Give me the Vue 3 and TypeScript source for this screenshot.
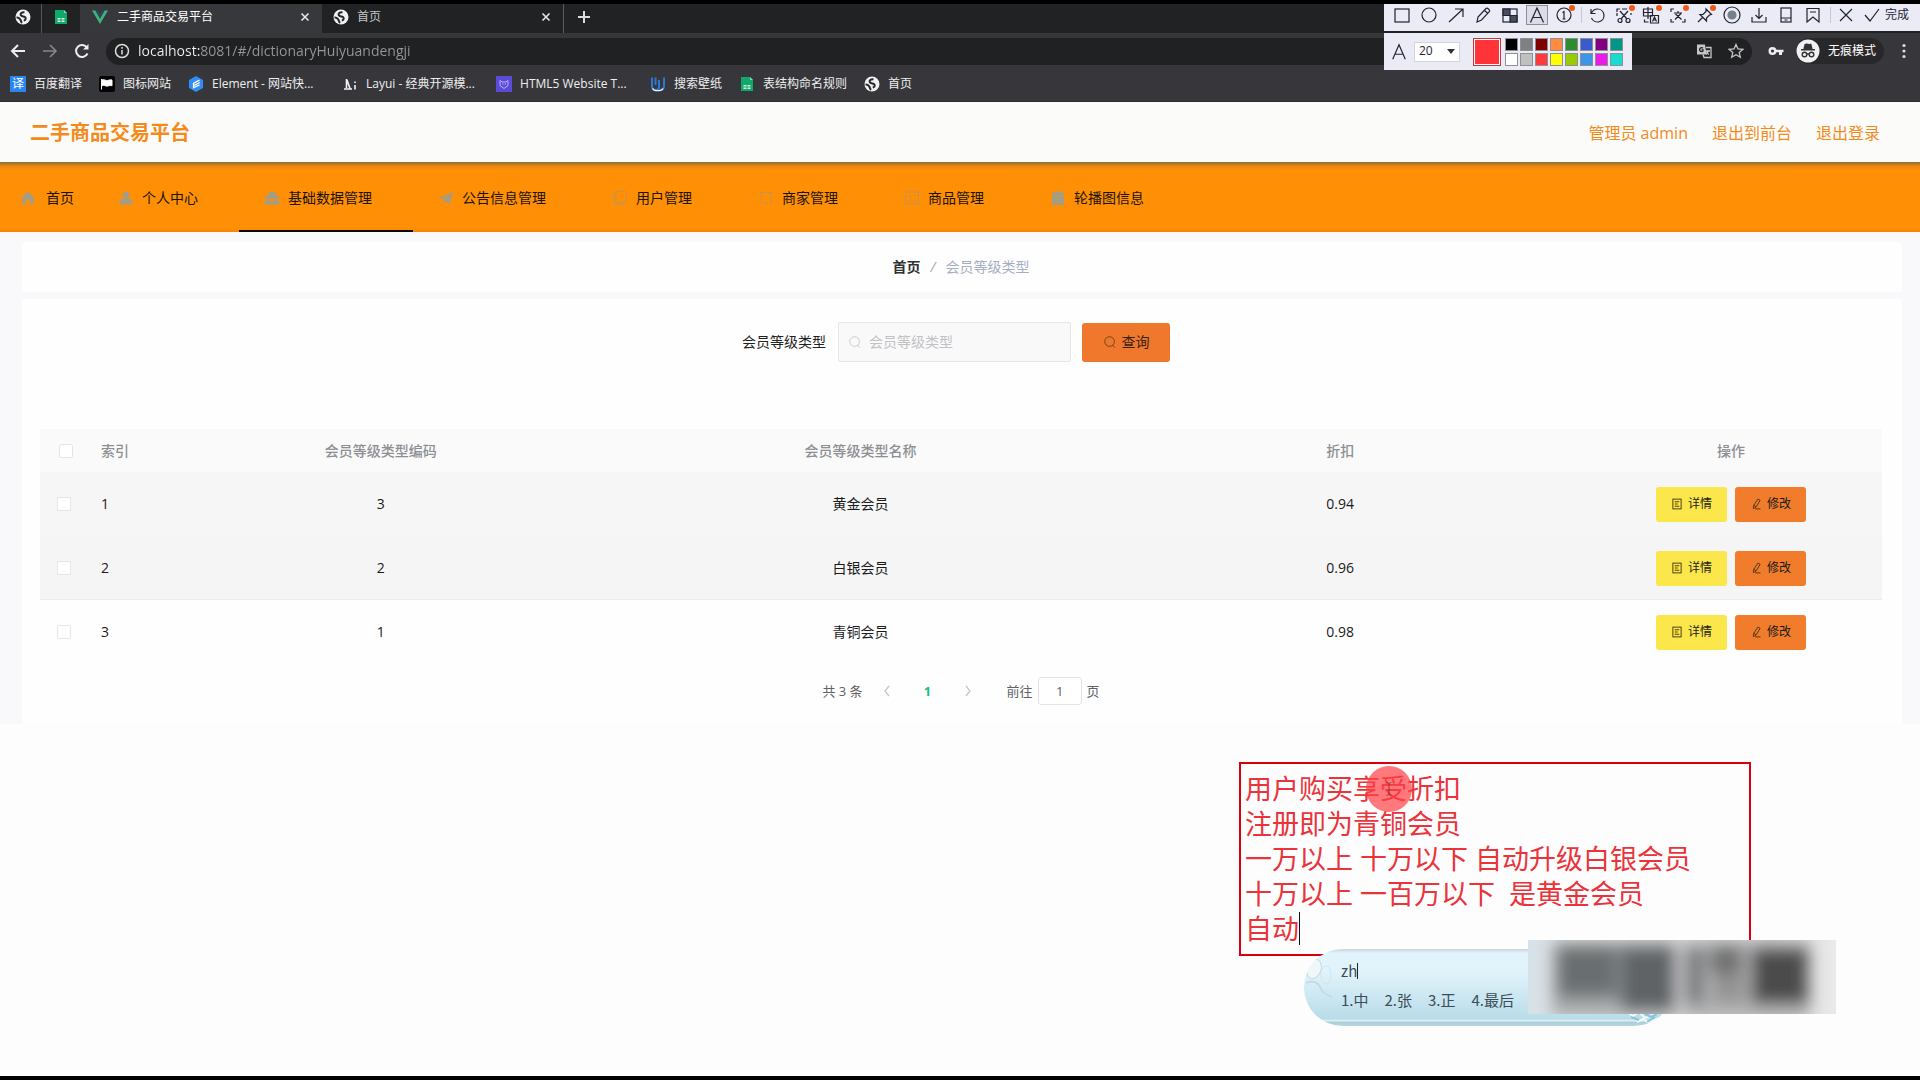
<script setup lang="ts">
import { ref } from 'vue'

interface Level {
  id: number
  code: string
  name: string
  discount: string
}

const icons: Record<string, string> = {
  globe:
    '<circle cx="8" cy="8" r="7.500" fill="#f1f1f1"/><path d="M9.500 3.200C6.500 3 5 4.500 5.800 6.300c.8 1.500 3 .8 4.200 1.700 1.500 1.200.5 3-1.200 3.600M1.500 8.500c1.500-.2 3 .5 3.800 2 .5 1 .8 2.500 1.700 3.500" fill="none" stroke="#25272a" stroke-width="2"/>',
  sheet:
    '<path d="M2 1h9l3 3v11H2z" fill="#11a86b"/><path d="M11 1v3h3z" fill="#7fd6b0"/><path d="M4.500 9h3v1.500h-3zM8.500 9h3v1.500h-3zM4.500 11.500h3V13h-3zM8.500 11.500h3V13h-3z" fill="#d8f5e8"/>',
  vue: '<path d="M0 1.500h3.400L8 9.500l4.600-8H16L8 15z" fill="#3fb27f"/><path d="M3.400 1.500h2.800L8 4.700l1.800-3.200h2.800L8 9.500z" fill="#2c4a52"/>',
  flag: '<rect width="16" height="16" rx="2" fill="#050505"/><path d="M2.500 3v10.500M3 4c2-1.200 3.500.9 5.500.5 1.500-.3 2.500-1 4.500-.4v5.600c-2-.6-3 .2-4.500.4C6.500 10.400 5 8.600 3 9.700z" fill="#fff" stroke="#fff"/>',
  element:
    '<path d="M8 0l7 4v8l-7 4-7-4V4z" fill="#2f8df5"/><path d="M11.500 4.200L5.500 7.300v4.500l6-3M11.800 6.500L6 9.500" fill="none" stroke="#fff" stroke-width="1.300"/>',
  layui:
    '<path d="M4.500 3v9M5 4l3 8.500M2 13h8" fill="none" stroke="#f4f4f4" stroke-width="1.600"/><path d="M13 5.500V7M13 9v4.500" stroke="#f4f4f4" stroke-width="1.600"/>',
  html5:
    '<rect width="16" height="16" fill="#5b4bd8"/><path d="M4 4.500l2 1.500h4l2-1.500v5L8 12.500 4 9.500z" fill="none" stroke="#b9b2ff"/><path d="M6.500 8h.8M8.800 8h.8" stroke="#fff"/>',
  wall: '<path d="M2 1.500v8.500c0 2.500 1.500 4 4 4s3-1.500 3-3V4M5.500 1.500v7.500M14 1.500v8.500c0 3-2 4-4.500 4" fill="none" stroke="#2f78d0" stroke-width="2"/><path d="M2.500 12.500c1 2 3 2.200 5 2.200s4.500 0 5.600-2.200" fill="none" stroke="#eaf2fb" stroke-width="1.300"/>',
  home: '<path d="M8 1.500L15 8h-1.500v6.500H10V10H6v4.500H2.500V8H1z" fill="#a39d85"/>',
  user: '<circle cx="8" cy="5" r="3.500" fill="#a39d85"/><path d="M1.500 14.500v-2.500c0-2.200 2-3.200 4-3.200h5c2 0 4 1 4 3.200v2.500z" fill="#a39d85"/>',
  box: '<path d="M4 3l4-1.500L12.500 3v3H15v2.500H1V6h3zM1 9.500h5.500V11h3V9.500H15v5H1z" fill="#a39d85"/>',
  send: '<path d="M15 2L1 7.500l4 2zM15 2L6 10v4l2.500-2.500L12 13.500z" fill="#a39d85"/>',
  copy: '<rect x="4" y="1.500" width="10" height="11" rx="1" fill="none" stroke="#c3944d"/><path d="M4 3.500H2v11h9.500v-2" fill="none" stroke="#c3944d"/>',
  shop: '<path d="M3 14V2.500h10V14M3 3H1.500M13 3h1.500M6 14l2-1.500 2 1.500" fill="none" stroke="#c3944d"/>',
  goods:
    '<rect x="1.500" y="2" width="13" height="12" fill="none" stroke="#c3944d"/><path d="M4.500 5l3 3-3 3M9 11h3M9 5.500h3" fill="none" stroke="#c3944d"/>',
  image: '<path d="M4.500 1.500h7V3H14v12H2V3h2.500z" fill="#a39d85"/><path d="M4.500 6.500h7M4.500 9.500h7M4.500 12.500h5" stroke="#b89c62"/>',
  search: '<circle cx="7.500" cy="7.500" r="5.500"/><path d="M11 11.500l2.500 3"/>',
  doc: '<rect x="2.500" y="1.500" width="11" height="13"/><path d="M5 5h6M5 8h4M5 11h6"/>',
  edit: '<path d="M10.500 1.500l3 1.700-5.500 9-3.500 2 .2-4zM7 14.500h7M5 9.500l3 2"/>',
}

const bookmarks = [
  { icon: 'baidu', text: '百度翻译' },
  { icon: 'flag', text: '图标网站' },
  { icon: 'element', text: 'Element - 网站快...', long: true },
  { icon: 'layui', text: 'Layui - 经典开源模...', long: true },
  { icon: 'html5', text: 'HTML5 Website T...', long: true },
  { icon: 'wall', text: '搜索壁纸' },
  { icon: 'sheet', text: '表结构命名规则' },
  { icon: 'globe', text: '首页' },
]

const menus = [
  { icon: 'user', text: '个人中心' },
  { icon: 'box', text: '基础数据管理', active: true },
  { icon: 'send', text: '公告信息管理' },
  { icon: 'copy', text: '用户管理' },
  { icon: 'shop', text: '商家管理' },
  { icon: 'goods', text: '商品管理' },
  { icon: 'image', text: '轮播图信息' },
]

// Capture-bar tools, in order; "hot" ones carry an orange marker.
const tools = [
  { name: '矩形', art: '<rect x="3" y="4" width="14" height="13"/>' },
  { name: '椭圆', art: '<circle cx="10" cy="10" r="7"/>' },
  { name: '箭头', art: '<path d="M3 17L17 4M9 4h8v8"/>' },
  { name: '画笔', art: '<path d="M4 17l1-5L13 3.500c1-1 4.500 1.500 3.500 3L8.500 15zM11.500 5.500l3.500 3"/>' },
  {
    name: '马赛克',
    art: '<rect x="3" y="4" width="14" height="13"/><path d="M3 4h7v6.500H3zM10 10.500h7V17h-7z" fill="#4a4d5c"/>',
  },
  { name: '文字', art: '<path d="M3.500 17.500L10 3l6.500 14.500M6 12.500h8"/>', on: true },
  { name: '序号', art: '<circle cx="10" cy="10" r="7"/><path d="M8.500 7.500L10 6.500v7.500M8.500 14h3"/>', hot: true },
  { name: '撤销', art: '<path d="M4 4v4.500h4.500M4.500 8C6 5 8 4 10.500 4a6.500 6.500 0 1 1-6 9"/>', sep: true },
  {
    name: '裁剪',
    art: '<path d="M3 7V4h3M17 8v2M3 11V8M8 4h5M6 6l7 8M14 6l-7 8"/><circle cx="6" cy="15.500" r="2"/><circle cx="14" cy="15.500" r="2"/>',
    hot: true,
  },
  {
    name: '翻译',
    art: '<path d="M2.500 4h9v7h-9zM2.500 7.500h9M7 2v12M3.500 14.500v2.500h4M9.500 10.500h8v7.500h-8zM11.500 16.500l2-4.500 2 4.500M12.200 15h2.600"/>',
    hot: true,
  },
  {
    name: '识别',
    art: '<path d="M3 7V4h3M14 17h3v-3M3 14v3h3M6 8h8M10 6v2M7 14.500l6-6M7.500 9l6 5.500"/>',
    hot: true,
  },
  { name: '钉住', art: '<path d="M3 17l5-5M11 4l5.500 5.500-2 .5-3 3v3L5 9.500h3l3-3z"/>', hot: true },
  { name: '录制', art: '<circle cx="10" cy="10" r="8"/><circle cx="10" cy="10" r="4" fill="#75808a" stroke="#75808a"/>' },
  { name: '保存', art: '<path d="M10 3v10M6.500 10l3.500 3.500 3.500-3.500M3 12v5h14v-5"/>' },
  { name: '发送', art: '<rect x="5" y="3" width="10" height="14"/><path d="M5 13h10M8.500 15h3"/>' },
  { name: '收藏', art: '<path d="M4 3.500h12V17l-6-5-6 5zM7 7h6"/>' },
]

const palette = [
  '#000000', '#808080', '#800000', '#ff8c40', '#2e8b2e', '#3a5bcd', '#800080', '#009688',
  '#ffffff', '#c0c0c0', '#ff3a3f', '#ffff00', '#98cb00', '#3c96e8', '#ec1ce8', '#18dccf',
]

const levels: Level[] = [
  { id: 1, code: '3', name: '黄金会员', discount: '0.94' },
  { id: 2, code: '2', name: '白银会员', discount: '0.96' },
  { id: 3, code: '1', name: '青铜会员', discount: '0.98' },
]

const url = ref('localhost:8081/#/dictionaryHuiyuandengji')
const keyword = ref('')
const page = ref('1')
const fontSize = ref('20')

const candidates = ['1.中', '2.张', '3.正', '4.最后']
</script>

<template>
  <div class="screen">
    <header class="browser">
      <div class="tabs">
        <button class="tab pin" aria-label="首页"><svg viewBox="0 0 16 16" v-html="icons.globe" /></button>
        <button class="tab pin second" aria-label="表格"><svg viewBox="0 0 16 16" v-html="icons.sheet" /></button>
        <div class="tab current">
          <svg viewBox="0 0 16 16" v-html="icons.vue" />
          <span>二手商品交易平台</span>
          <button class="x" aria-label="关闭">
            <svg viewBox="0 0 10 10"><path d="M1.500 1.500l7 7M8.500 1.500l-7 7" /></svg>
          </button>
        </div>
        <div class="tab other">
          <svg viewBox="0 0 16 16" v-html="icons.globe" />
          <span>首页</span>
          <button class="x" aria-label="关闭">
            <svg viewBox="0 0 10 10"><path d="M1.500 1.500l7 7M8.500 1.500l-7 7" /></svg>
          </button>
        </div>
        <button class="plus" aria-label="新标签页">
          <svg viewBox="0 0 12 12"><path d="M6 0v12M0 6h12" /></svg>
        </button>
      </div>
      <div class="toolbar">
        <button class="nav-btn" aria-label="后退">
          <svg viewBox="0 0 16 16"><path d="M15 8H2M8 2L2 8l6 6" /></svg>
        </button>
        <button class="nav-btn dim" aria-label="前进">
          <svg viewBox="0 0 16 16"><path d="M1 8h13M8 2l6 6-6 6" /></svg>
        </button>
        <button class="nav-btn" aria-label="刷新">
          <svg viewBox="0 0 16 16"><path d="M13.500 10.500a6 6 0 1 1-.5-6" /><path d="M14.500 1v5.500H9z" fill="#eee" stroke="none" /></svg>
        </button>
        <div class="address">
          <svg class="info" viewBox="0 0 16 16">
            <circle cx="8" cy="8" r="6.500" /><path d="M8 7v4.500M8 4v1.800" />
          </svg>
          <input v-model="url" aria-label="地址" />
          <button class="addr-btn" aria-label="翻译此页">
            <svg viewBox="0 0 16 16">
              <path d="M1 1.500h8l1.500 10H1z" fill="#c6c7ca" stroke="none" />
              <path d="M10 4.500h5v10H8l-1-3M9.500 8h4.500M12 7v1c0 2-1 3-2 3.500M10.500 9c.5 1.200 1.500 2 2.500 2.500" />
              <path d="M7 5.200A2 2 0 1 0 7 8V6.800H5.500" stroke="#222528" />
            </svg>
          </button>
          <button class="addr-btn" aria-label="收藏">
            <svg viewBox="0 0 16 16"><path d="M8 1.500l2 4.500 4.800.4-3.600 3.200 1.100 4.700L8 11.800l-4.300 2.500 1.100-4.700L1.200 6.400 6 6z" /></svg>
          </button>
        </div>
        <button class="key" aria-label="密码">
          <svg viewBox="0 0 16 16">
            <circle cx="4.500" cy="8" r="2.800" fill="none" stroke="#eee" stroke-width="2.400" /><path d="M7 6.800h8.500v2.500H14V12h-3V9.300H7z" fill="#eee" />
          </svg>
        </button>
        <button class="incognito">
          <svg viewBox="0 0 24 24">
            <circle cx="12" cy="12" r="11.500" fill="#f1f1f3" />
            <path d="M8.200 9.500l1-4c1.500-.8 4 .8 5.600 0l1 4zM5 10.700h14" fill="#333" stroke="#333" stroke-width="1.400" />
            <g fill="none" stroke="#333" stroke-width="1.400"><circle cx="8.500" cy="15.500" r="2.300" /><circle cx="15.500" cy="15.500" r="2.300" /><path d="M10.800 15h2.400" /></g>
          </svg>
          <span>无痕模式</span>
        </button>
        <button class="dots" aria-label="菜单">
          <svg viewBox="0 0 4 16"><circle cx="2" cy="2.500" r="1.600" /><circle cx="2" cy="8" r="1.600" /><circle cx="2" cy="13.500" r="1.600" /></svg>
        </button>
      </div>
      <nav class="bookmarks">
        <a v-for="b in bookmarks" :key="b.text" href="#" :class="{ long: b.long }">
          <span v-if="b.icon === 'baidu'" class="yi">译</span>
          <svg v-else viewBox="0 0 16 16" v-html="icons[b.icon]" />
          <span>{{ b.text }}</span>
        </a>
      </nav>
    </header>

    <div class="app-head">
      <h1>二手商品交易平台</h1>
      <div class="who">
        <span>管理员 admin</span>
        <a href="#">退出到前台</a>
        <a href="#">退出登录</a>
      </div>
    </div>

    <nav class="menu">
      <a class="first" href="#"><svg viewBox="0 0 16 16" v-html="icons.home" />首页</a>
      <a v-for="m in menus" :key="m.text" href="#" :class="{ active: m.active }">
        <svg viewBox="0 0 16 16" v-html="icons[m.icon]" />{{ m.text }}
      </a>
    </nav>

    <main class="content">
      <div class="crumbs">
        <a href="#">首页</a><i>/</i><span>会员等级类型</span>
      </div>
      <section class="card">
        <form class="search" @submit.prevent>
          <label for="kw">会员等级类型</label>
          <div class="field">
            <svg viewBox="0 0 16 16" v-html="icons.search" />
            <input id="kw" v-model="keyword" placeholder="会员等级类型" />
          </div>
          <button type="submit"><svg viewBox="0 0 16 16" v-html="icons.search" />查询</button>
        </form>

        <table>
          <colgroup>
            <col class="c-check" /><col class="c-index" /><col /><col /><col /><col class="c-ops" />
          </colgroup>
          <thead>
            <tr>
              <th><input type="checkbox" aria-label="全选" /></th>
              <th class="left">索引</th>
              <th>会员等级类型编码</th>
              <th>会员等级类型名称</th>
              <th>折扣</th>
              <th>操作</th>
            </tr>
          </thead>
          <tbody>
            <tr v-for="l in levels" :key="l.id">
              <td><input type="checkbox" :aria-label="l.name" /></td>
              <td class="left">{{ l.id }}</td>
              <td>{{ l.code }}</td>
              <td>{{ l.name }}</td>
              <td>{{ l.discount }}</td>
              <td>
                <div class="ops">
                  <button class="detail"><svg viewBox="0 0 16 16" v-html="icons.doc" />详情</button>
                  <button class="edit"><svg viewBox="0 0 16 16" v-html="icons.edit" />修改</button>
                </div>
              </td>
            </tr>
          </tbody>
        </table>

        <div class="pager">
          <span>共 3 条</span>
          <button class="arrow" aria-label="上一页"><svg viewBox="0 0 8 12"><path d="M6 1L2 6l4 5" /></svg></button>
          <button class="num">1</button>
          <button class="arrow" aria-label="下一页"><svg viewBox="0 0 8 12"><path d="M2 1l4 5-4 5" /></svg></button>
          <label for="jump">前往</label>
          <input id="jump" v-model="page" />
          <span>页</span>
        </div>
      </section>
    </main>

    <div class="capture">
      <div class="bar">
        <button v-for="t in tools" :key="t.name" class="tool" :class="{ on: t.on, sep: t.sep, hot: t.hot }" :aria-label="t.name">
          <svg viewBox="0 0 20 20" v-html="t.art" />
        </button>
        <button class="tool sep" aria-label="取消"><svg viewBox="0 0 20 20"><path d="M4 4l12 12M16 4L4 16" /></svg></button>
        <button class="done">
          <svg viewBox="0 0 20 20"><path d="M3 10l5 6L17 4" /></svg>完成
        </button>
      </div>
      <div class="panel">
        <svg class="glyph" viewBox="0 0 20 20"><path d="M3 18L10 2l7 16M5.500 12.500h9" /></svg>
        <div class="size">
          <select v-model="fontSize" aria-label="字号"><option>20</option><option>24</option></select>
        </div>
        <span class="swatch big"></span>
        <div class="palette">
          <button v-for="c in palette" :key="c" class="swatch" :aria-label="c" :style="{ background: c }"></button>
        </div>
      </div>
    </div>

    <div class="note">
      <p>用户购买享受折扣</p>
      <p>注册即为青铜会员</p>
      <p>一万以上 十万以下 自动升级白银会员</p>
      <p>十万以上 一百万以下&nbsp; 是黄金会员</p>
      <p>自动<i class="caret"></i></p>
      <span class="pointer">
        <svg viewBox="0 0 10 20"><path d="M2 2c2 0 3 1 3 2v12c0 1-1 2-3 2M8 2C6 2 5 3 5 4M5 16c0 1 1 2 3 2" /></svg>
      </span>
    </div>

    <div class="ime">
      <svg class="drops" viewBox="0 0 50 60">
        <ellipse cx="10" cy="18" rx="7" ry="10" transform="rotate(20 10 18)" fill="#f0f7f9" stroke="#c3d8df" />
        <ellipse cx="22" cy="24" rx="5" ry="9" fill="none" stroke="#d0e5ed" />
        <path d="M2 32c6-3 12-1 14 4s6 8 12 10" fill="none" stroke="#c2dbe5" stroke-width="2" />
      </svg>
      <div class="typed">zh<i></i></div>
      <div class="cands"><span v-for="c in candidates" :key="c">{{ c }}</span></div>
      <svg class="splash" viewBox="0 0 50 16">
        <path d="M4 2l6 4 6-4 6 6 8-3 8-3M14 12l6-3 6 4 10-5" fill="none" stroke="#f4fbfd" stroke-width="2" />
        <path d="M8 7l8 3M22 4l6 3 6-3M24 12l8-5" fill="none" stroke="#8cc2d8" stroke-width="2" />
      </svg>
    </div>

    <div class="smudge">
      <svg viewBox="0 0 308 74" preserveAspectRatio="none">
        <defs><filter id="soft" x="-20%" y="-40%" width="140%" height="180%"><feGaussianBlur stdDeviation="8" /></filter></defs>
        <g filter="url(#soft)">
          <rect x="24" y="2" width="258" height="76" fill="#b0b1b2" />
          <rect x="28" y="4" width="122" height="58" fill="#8d9294" />
          <rect x="30" y="8" width="58" height="46" fill="#696e70" />
          <rect x="94" y="8" width="54" height="62" fill="#5f6466" />
          <rect x="158" y="8" width="16" height="56" fill="#6c6e6f" />
          <rect x="182" y="6" width="32" height="28" fill="#6f6f6f" />
          <rect x="186" y="34" width="30" height="28" fill="#939393" />
          <rect x="224" y="8" width="56" height="56" fill="#4b4b4b" />
          <rect x="148" y="-10" width="8" height="94" fill="#d6d6d8" />
        </g>
      </svg>
    </div>
  </div>
</template>

<style>
body {
  background: #fdfdfd;
}
</style>

<style scoped>
* {
  box-sizing: border-box;
}
.screen {
  position: relative;
  min-height: 100vh;
  overflow: hidden;
  border-top: 4px solid #000;
  border-bottom: 4px solid #000;
  background: #fdfdfd;
  color: #222;
  font: 14px/20px 'Open Sans', 'Noto Sans CJK SC', sans-serif;
}
button {
  display: inline-flex;
  align-items: center;
  justify-content: center;
  padding: 0;
  border: 0;
  background: none;
  color: inherit;
  font: inherit;
}
a {
  color: inherit;
  text-decoration: none;
}
svg {
  display: block;
  flex: none;
}

/* browser chrome */
.browser {
  height: 98px;
  background: #37373b;
  color: #eee;
  font-size: 12px;
  border-bottom: 1px solid #2b2b2d;
}
.tabs {
  display: flex;
  height: 29px;
  background: #202223;
}
.tab {
  display: flex;
  align-items: center;
}
.tab svg {
  width: 16px;
  height: 16px;
}
.pin {
  width: 42px;
  padding: 0 0 4px 4px;
  border-right: 1px solid #55575a;
}
.pin.second {
  width: 38px;
  padding: 0 0 4px;
  border: 0;
}
.current,
.other {
  width: 242px;
  padding: 0 12px 4px;
  gap: 9px;
}
.current {
  background: #37383b;
  color: #fff;
}
.other {
  gap: 8px;
  padding-left: 11px;
  color: #c4c6c8;
  border-right: 1px solid #5b5d60;
}
.tab .x {
  width: 10px;
  height: 10px;
  margin-left: auto;
}
.x svg {
  width: 10px;
  height: 10px;
  stroke: #e6e6e6;
  stroke-width: 1.6;
}
.plus {
  width: 40px;
  padding-bottom: 4px;
}
.plus svg {
  width: 12px;
  height: 12px;
  stroke: #ddd;
  stroke-width: 2;
}
.toolbar {
  display: flex;
  align-items: center;
  height: 36px;
  padding-left: 10px;
}
.nav-btn {
  width: 32px;
  padding-right: 16px;
}
.nav-btn svg {
  width: 16px;
  height: 16px;
  fill: none;
  stroke: #eee;
  stroke-width: 2;
}
.dim svg {
  stroke: #86888b;
  stroke-width: 1.6;
}
.address {
  flex: 1;
  display: flex;
  align-items: center;
  height: 27px;
  padding-left: 8px;
  border-radius: 14px;
  background: #1f2123;
}
.info {
  width: 16px;
  height: 16px;
  fill: none;
  stroke: #ddd;
  stroke-width: 1.5;
}
.address input {
  flex: 1;
  min-width: 0;
  margin-left: 8px;
  padding: 0;
  border: 0;
  outline: 0;
  font: 14px/20px 'Open Sans', sans-serif;
  background: linear-gradient(90deg, #f2f2f2 62px, #96989b 62px);
  background-clip: text;
  -webkit-background-clip: text;
  color: transparent;
}
.addr-btn {
  width: 32px;
}
.addr-btn svg {
  width: 16px;
  height: 16px;
  fill: none;
  stroke: #c6c7ca;
  stroke-width: 1.3;
}
.key {
  width: 16px;
  margin: 0 12px 0 16px;
}
.key svg {
  width: 16px;
  height: 16px;
}
.incognito {
  gap: 8px;
  height: 26px;
  padding-right: 8px;
  border-radius: 13px;
  background: #28282b;
  color: #fff;
}
.incognito svg {
  width: 24px;
  height: 24px;
}
.dots {
  width: 32px;
  margin-left: 4px;
}
.dots svg {
  width: 4px;
  height: 16px;
  fill: #ddd;
}
.bookmarks {
  display: flex;
  align-items: center;
  gap: 17px;
  height: 30px;
  padding: 0 10px;
}
.bookmarks a {
  display: flex;
  align-items: center;
  gap: 8px;
  white-space: nowrap;
}
.bookmarks .long {
  width: 137px;
}
.bookmarks svg,
.yi {
  width: 16px;
  height: 16px;
}
.yi {
  background: #2a86f0;
  color: #fff;
  line-height: 16px;
  text-align: center;
}

/* site header */
.app-head {
  display: flex;
  align-items: center;
  justify-content: space-between;
  height: 60px;
  padding: 2px 40px 0 30px;
  background: #fbfcf9;
  color: #f58a1c;
}
h1 {
  margin: 0;
  font-size: 20px;
  line-height: 28px;
}
.who {
  display: flex;
  gap: 24px;
  font-size: 16px;
}
.menu {
  display: flex;
  height: 70px;
  background: linear-gradient(#8e6c3a, #e58610 4px, #ff8f04 8px, #ff8f04 66px, #f58504);
  color: #1c1408;
}
.menu a {
  display: flex;
  align-items: center;
  gap: 8px;
  padding: 4px 41px 0 25px;
  border-bottom: 2px solid transparent;
}
.menu a.first {
  gap: 10px;
  padding: 3px 19px 0 20px;
}
.menu a.active {
  border-color: #0c0806;
}
.menu svg {
  width: 16px;
  height: 16px;
}

/* content */
.content {
  padding: 10px 18px 0 22px;
  background: #f9f9fb;
}
.crumbs {
  display: flex;
  justify-content: center;
  align-items: center;
  height: 50px;
  margin-bottom: 7px;
  padding-right: 2px;
  background: #fefefe;
  border-radius: 4px;
}
.crumbs a {
  color: #303133;
  font-weight: 700;
}
.crumbs i {
  margin: 0 10px;
  color: #a4a9b4;
}
.crumbs span {
  color: #a5adc4;
}
.card {
  padding: 23px 20px 19px 18px;
  background: #fefefe;
}
.search {
  display: flex;
  justify-content: center;
  align-items: center;
  padding-right: 10px;
  margin-bottom: 67px;
}
.field {
  display: flex;
  align-items: center;
  gap: 7px;
  width: 233px;
  height: 40px;
  margin: 0 11px 0 12px;
  padding: 0 9px;
  border: 1px solid #e6e6e6;
  border-radius: 2px;
  background: #f9f9f9;
}
.field svg,
.search button svg {
  width: 14px;
  height: 14px;
  fill: none;
  stroke: #c4c6ca;
}
.field input {
  flex: 1;
  min-width: 0;
  padding: 0;
  border: 0;
  outline: 0;
  background: none;
  font: inherit;
}
.field input::placeholder {
  color: #c0c2c6;
}
.search button {
  gap: 5px;
  width: 88px;
  height: 39px;
  border-radius: 3px;
  background: #ef782c;
  color: #3b2210;
}
.search button svg {
  stroke: #6a3a18;
}

table {
  width: 100%;
  table-layout: fixed;
  border-collapse: collapse;
  text-align: center;
}
.c-check {
  width: 51px;
}
.c-index {
  width: 50px;
}
.c-ops {
  width: 302px;
}
th,
td {
  padding: 0;
}
th {
  height: 43px;
  background: #fafafa;
  color: #8d8f93;
  font-weight: 500;
}
td {
  height: 64px;
  color: #1a1a1a;
}
tbody tr {
  background: #f6f6f6;
}
tbody tr:nth-child(2) td {
  background: #f5f5f5;
  box-shadow: inset 0 -1px #ebebeb;
}
tbody tr:last-child {
  background: #fefefe;
}
.left {
  padding-left: 10px;
  text-align: left;
}
th input,
td input {
  appearance: none;
  display: block;
  width: 14px;
  height: 14px;
  margin: 0 auto;
  border: 1px solid #e4e5e8;
  border-radius: 2px;
  background: #fff;
}
td input {
  margin-left: 17px;
}
.ops {
  display: flex;
  justify-content: center;
  gap: 8px;
}
.ops button {
  gap: 5px;
  width: 71px;
  height: 35px;
  border-radius: 3px;
  font-size: 12px;
}
.ops svg {
  width: 12px;
  height: 12px;
  fill: none;
  stroke: #4c3c14;
  stroke-width: 1.3;
}
.detail {
  background: #fbe74b;
}
.edit {
  background: #f07c2c;
}

.pager {
  display: flex;
  justify-content: center;
  align-items: center;
  height: 28px;
  margin-top: 13px;
  color: #606266;
  font-size: 13px;
}
.arrow {
  width: 49px;
}
.arrow svg {
  width: 8px;
  height: 12px;
  fill: none;
  stroke: #c2c5ca;
  stroke-width: 1.3;
}
.num {
  width: 32px;
  color: #1fb98c;
  font-weight: 700;
}
.pager label {
  margin-left: 14px;
}
.pager input {
  width: 44px;
  height: 28px;
  margin: 0 5px;
  padding: 0;
  border: 1px solid #e2e3e6;
  border-radius: 3px;
  background: #fff;
  color: #606266;
  font: inherit;
  text-align: center;
}

/* capture tool bar over the browser */
.capture {
  position: absolute;
  top: 0;
  right: 0;
  width: 536px;
  color: #1f2233;
}
.bar {
  display: flex;
  align-items: center;
  height: 27px;
  padding: 0 0 5px 7px;
  background: #ebebf6;
  font-size: 12px;
}
.tool {
  position: relative;
  width: 22px;
  height: 20px;
  margin-right: 5px;
}
.tool svg,
.done svg {
  width: 20px;
  height: 20px;
  fill: none;
  stroke: #1f2233;
  stroke-width: 1.2;
}
.tool.on {
  border: 1px solid #8c8e9a;
  background: #dcdce8;
}
.tool.sep {
  margin-left: 6px;
}
.tool.sep::before {
  content: '';
  position: absolute;
  left: -5px;
  top: 2px;
  height: 16px;
  border-left: 1px solid #c8c8d4;
}
.tool.hot::after {
  content: '';
  position: absolute;
  right: 0;
  top: 0;
  width: 6px;
  height: 6px;
  border-radius: 3px;
  background: #f05a18;
}
.done {
  gap: 3px;
}
.panel {
  display: flex;
  align-items: center;
  width: 248px;
  height: 37px;
  margin-top: 2px;
  padding-left: 6px;
  background: #ebebf6;
}
.glyph {
  width: 18px;
  height: 18px;
  fill: none;
  stroke: #1f2233;
  stroke-width: 1.3;
}
.size {
  position: relative;
  width: 46px;
  height: 20px;
  margin: 0 13px 0 6px;
}
.size select {
  appearance: none;
  display: block;
  width: 100%;
  height: 100%;
  padding: 0 4px 2px;
  border: 1px solid #d4d4e0;
  border-radius: 0;
  background: #fff;
  color: #1f2233;
  font: 12px/16px 'Open Sans', sans-serif;
}
.size::after {
  content: '';
  position: absolute;
  right: 5px;
  top: 7px;
  border: 4px solid transparent;
  border-top: 5px solid #333;
  border-bottom: 0;
}
.swatch {
  width: 13px;
  height: 13px;
  border: 1px solid #8f8f98;
}
.big {
  width: 28px;
  height: 28px;
  margin-right: 4px;
  border: 1px solid #c03a40;
  background: #ff3338;
  box-shadow: inset 0 0 0 1px #fff;
}
.palette {
  display: grid;
  grid-template-columns: repeat(8, 13px);
  gap: 2px;
}

/* annotation */
.note {
  position: absolute;
  left: 1239px;
  top: 758px;
  width: 512px;
  height: 194px;
  padding: 7px 4px;
  border: 2px solid #d8000f;
  color: #ea333b;
  font-size: 27px;
  line-height: 35px;
  white-space: nowrap;
}
.note p {
  display: flex;
  align-items: center;
  margin: 0;
}
.caret {
  width: 1px;
  height: 33px;
  background: #111;
}
.pointer {
  position: absolute;
  left: 125px;
  top: 2px;
  width: 46px;
  height: 46px;
  display: flex;
  align-items: center;
  justify-content: center;
  border-radius: 50%;
  background: rgba(255, 62, 68, 0.7);
}
.pointer svg {
  width: 8px;
  height: 22px;
  fill: none;
  stroke: #7a2a2e;
}

.ime {
  position: absolute;
  left: 1304px;
  top: 945px;
  width: 369px;
  height: 77px;
  padding: 12px 0 0 37px;
  border-radius: 39px;
  overflow: hidden;
  background: linear-gradient(#c9d3df, #e2f3fb 4px, #e0f3fb 30%, #b9dce8 70px, #e6f4f8 72px, #a9cdd6 73px, #b8d8e0);
  color: #3c4c58;
  font: 15px/20px 'Noto Sans CJK SC', sans-serif;
}
.drops {
  position: absolute;
  left: 0;
  top: 2px;
  width: 50px;
  height: 60px;
}
.splash {
  position: absolute;
  right: 0;
  bottom: 0;
  width: 50px;
  height: 16px;
}
.typed,
.cands {
  position: relative;
  display: flex;
  align-items: center;
}
.typed i {
  width: 1px;
  height: 16px;
  background: #222;
}
.cands {
  gap: 16px;
  margin-top: 9px;
}
.smudge {
  position: absolute;
  left: 1528px;
  top: 936px;
  width: 308px;
  height: 74px;
  overflow: hidden;
  background: linear-gradient(90deg, #d6e2e8, #dedfe0 15%, #d6d6d8 80%, #eaeaeb);
}
.smudge svg {
  width: 100%;
  height: 100%;
}
</style>
